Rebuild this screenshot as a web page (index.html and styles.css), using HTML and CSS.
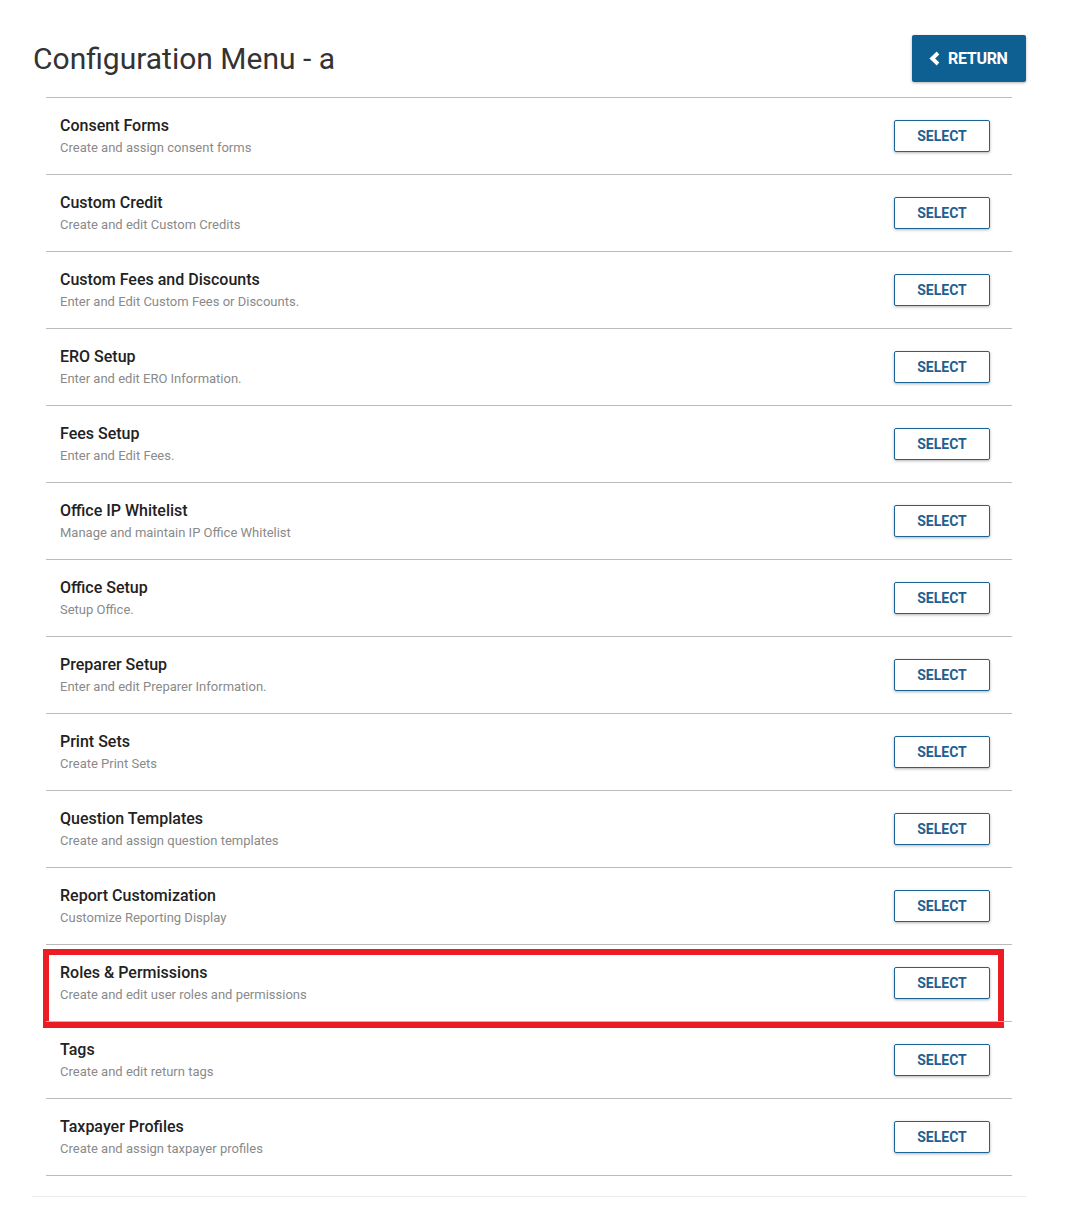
FILE: index.html
```html
<!DOCTYPE html>
<html>
  <head>
    <title>Configuration Menu</title>
    <link rel="stylesheet" href="styles.css">
  </head>
  <body>
    <div class="page">
      <div class="header">
        <h1 class="title">Configuration Menu - a</h1>
        <button class="return-btn">
          <svg class="chevron" width="11" height="15" viewBox="0 0 11 15">
            <polyline points="9,2 3.2,7.5 9,13" fill="none" stroke="#fff" stroke-width="3.8" stroke-linejoin="miter" />
          </svg>
          RETURN
        </button>
      </div>
      <div class="menu">
        <div class="row">
          <div class="info">
            <div class="name">Consent Forms</div>
            <div class="desc">Create and assign consent forms</div>
          </div>
          <button class="select-btn">SELECT</button>
        </div>
        <div class="row">
          <div class="info">
            <div class="name">Custom Credit</div>
            <div class="desc">Create and edit Custom Credits</div>
          </div>
          <button class="select-btn">SELECT</button>
        </div>
        <div class="row">
          <div class="info">
            <div class="name">Custom Fees and Discounts</div>
            <div class="desc">Enter and Edit Custom Fees or Discounts.</div>
          </div>
          <button class="select-btn">SELECT</button>
        </div>
        <div class="row">
          <div class="info">
            <div class="name">ERO Setup</div>
            <div class="desc">Enter and edit ERO Information.</div>
          </div>
          <button class="select-btn">SELECT</button>
        </div>
        <div class="row">
          <div class="info">
            <div class="name">Fees Setup</div>
            <div class="desc">Enter and Edit Fees.</div>
          </div>
          <button class="select-btn">SELECT</button>
        </div>
        <div class="row">
          <div class="info">
            <div class="name">Office IP Whitelist</div>
            <div class="desc">Manage and maintain IP Office Whitelist</div>
          </div>
          <button class="select-btn">SELECT</button>
        </div>
        <div class="row">
          <div class="info">
            <div class="name">Office Setup</div>
            <div class="desc">Setup Office.</div>
          </div>
          <button class="select-btn">SELECT</button>
        </div>
        <div class="row">
          <div class="info">
            <div class="name">Preparer Setup</div>
            <div class="desc">Enter and edit Preparer Information.</div>
          </div>
          <button class="select-btn">SELECT</button>
        </div>
        <div class="row">
          <div class="info">
            <div class="name">Print Sets</div>
            <div class="desc">Create Print Sets</div>
          </div>
          <button class="select-btn">SELECT</button>
        </div>
        <div class="row">
          <div class="info">
            <div class="name">Question Templates</div>
            <div class="desc">Create and assign question templates</div>
          </div>
          <button class="select-btn">SELECT</button>
        </div>
        <div class="row">
          <div class="info">
            <div class="name">Report Customization</div>
            <div class="desc">Customize Reporting Display</div>
          </div>
          <button class="select-btn">SELECT</button>
        </div>
        <div class="row highlighted">
          <div class="info">
            <div class="name">Roles &amp; Permissions</div>
            <div class="desc">Create and edit user roles and permissions</div>
          </div>
          <button class="select-btn">SELECT</button>
        </div>
        <div class="row">
          <div class="info">
            <div class="name">Tags</div>
            <div class="desc">Create and edit return tags</div>
          </div>
          <button class="select-btn">SELECT</button>
        </div>
        <div class="row">
          <div class="info">
            <div class="name">Taxpayer Profiles</div>
            <div class="desc">Create and assign taxpayer profiles</div>
          </div>
          <button class="select-btn">SELECT</button>
        </div>
      </div>
    </div>
  </body>
</html>
```

FILE: styles.css
```css
body {
  margin: 0;
  background: #fff;
  font-family: Roboto, "Liberation Sans", sans-serif;
}

.page {
  width: 994px;
  margin-left: 32px;
  padding-top: 35px;
  padding-bottom: 20px;
  border-bottom: 1px solid #ececec;
}

.header {
  display: flex;
  justify-content: space-between;
  align-items: center;
  margin-bottom: 15px;
}

.title {
  margin: 0 0 0 1px;
  font-size: 30px;
  font-weight: 400;
  color: #333;
  line-height: 36px;
}

.return-btn {
  display: flex;
  align-items: center;
  gap: 8px;
  width: 114px;
  height: 47px;
  padding: 0 0 0 17px;
  border: none;
  border-radius: 2px;
  background-color: #0f6092;
  color: #fff;
  font-family: Roboto, "Liberation Sans", sans-serif;
  font-size: 16px;
  font-weight: 700;
  letter-spacing: -0.3px;
  box-shadow: 0 1px 3px rgba(0, 0, 0, 0.3);
  cursor: pointer;
}

.menu {
  margin: 0 14px;
  border-bottom: 1px solid #bbb;
}

.row {
  position: relative;
  display: flex;
  justify-content: space-between;
  align-items: center;
  height: 76px;
  padding: 0 22px 0 14px;
  border-top: 1px solid #bbb;
}

.name {
  font-size: 16px;
  font-weight: 500;
  color: #222;
  line-height: 20px;
}

.desc {
  margin-top: 3px;
  font-size: 13px;
  color: #8a8a8a;
  line-height: 18px;
}

.select-btn {
  width: 96px;
  height: 32px;
  border: 1px solid #1b6496;
  border-radius: 2px;
  background: #fff;
  color: #1f5f8f;
  font-family: Roboto, "Liberation Sans", sans-serif;
  font-size: 14px;
  font-weight: 700;
  box-shadow: 0 1px 3px rgba(0, 0, 0, 0.3);
  cursor: pointer;
}

/* red annotation frame round one row */
.highlighted::after {
  content: "";
  position: absolute;
  top: 4px;
  left: -3px;
  right: 8px;
  bottom: -7px;
  border: 6px solid #ec1c24;
  pointer-events: none;
}
```
